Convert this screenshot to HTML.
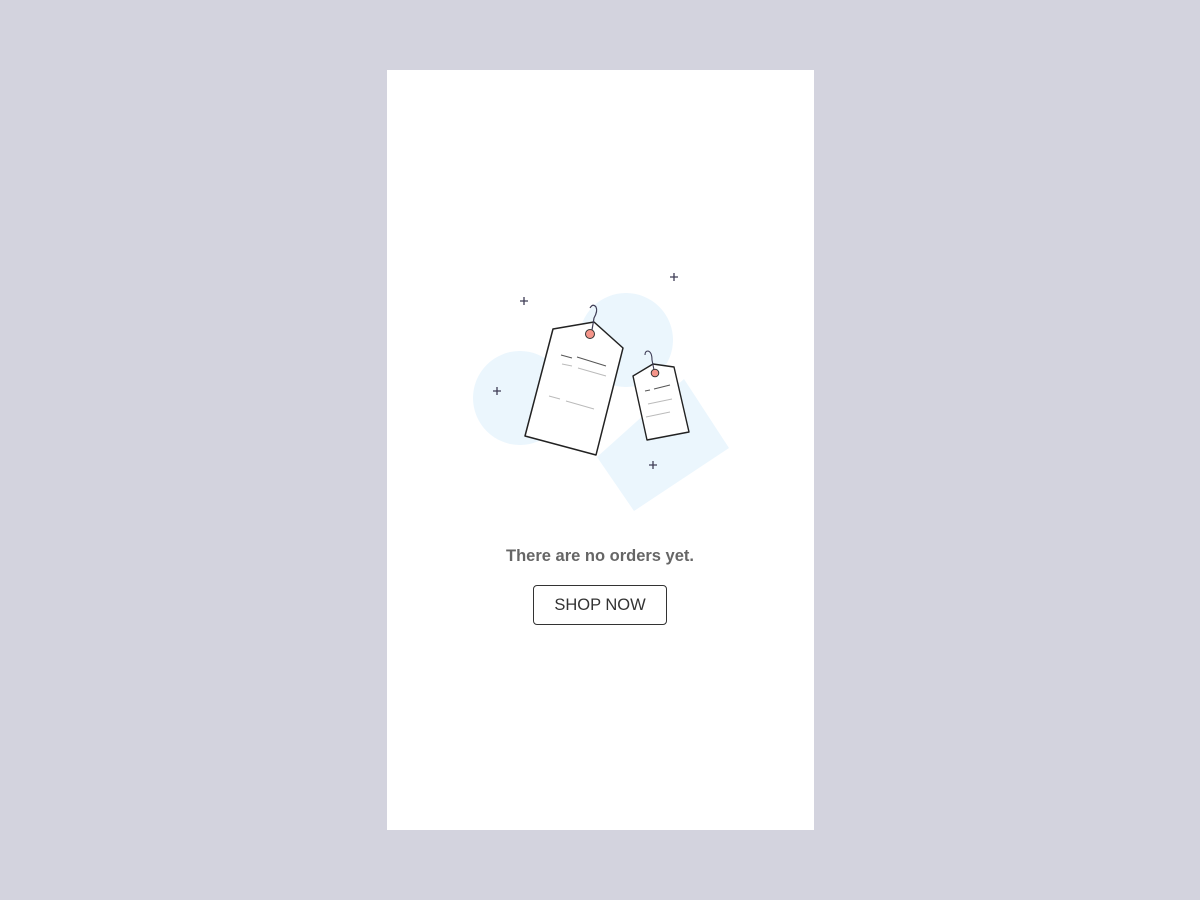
<!DOCTYPE html>
<html><head><style>
body{margin:0;width:1200px;height:900px;background:#d3d3de;position:relative;font-family:"Liberation Sans",sans-serif}
.card{position:absolute;left:387px;top:70px;width:427px;height:760px;background:#fff}
.t{position:absolute;left:0;width:1200px;top:547px;text-align:center;font-size:16.5px;font-weight:bold;color:#666}
.b{position:absolute;left:533px;top:585px;width:132px;height:38px;border:1px solid #333;border-radius:4px;text-align:center;line-height:38px;font-size:16.5px;color:#333;box-sizing:content-box}
</style></head><body>
<div class="card"></div>
<svg style="position:absolute;left:0;top:0" width="1200" height="900">
<g fill="#ebf6fd">
<circle cx="520" cy="398" r="47"/><circle cx="626" cy="340" r="47"/>
<polygon points="597,457 634,511 729,448 684,379"/>
</g>
<g stroke="#3f3d56" stroke-width="1.3">
<path d="M520 301h8M524 297v8M670 277h8M674 273v8M493 391h8M497 387v8M649 465h8M653 461v8"/>
</g>
<polygon points="553,329 594,322 623,348 596,455 525,436" fill="#fff" stroke="#222" stroke-width="1.5" stroke-linejoin="round"/>
<path d="M592 330 L594 318 Q598 311 596 307 Q593 303 590 308" fill="none" stroke="#3f3d56" stroke-width="1.2"/>
<circle cx="590" cy="334" r="4.5" fill="#f5958a" stroke="#333" stroke-width="1"/>
<g stroke-width="1">
<path d="M561 355l11 3M577 357l29 9" stroke="#555"/>
<path d="M562 364l10 2M578 368l28 8M549 396l11 3M566 401l28 8" stroke="#bbb"/>
</g>
<polygon points="633,376 653,364 674,367 689,432 647,440" fill="#fff" stroke="#222" stroke-width="1.4" stroke-linejoin="round"/>
<path d="M654 370 L652 360 Q652 352 648 351 Q645 351 645 355" fill="none" stroke="#3f3d56" stroke-width="1.1"/>
<circle cx="655" cy="373" r="3.8" fill="#f5958a" stroke="#333" stroke-width="1"/>
<g stroke-width="1">
<path d="M645 391l5-1M654 389l16-4" stroke="#555"/>
<path d="M648 404l24-5M646 417l24-5" stroke="#bbb"/>
</g>
</svg>
<div class="t">There are no orders yet.</div>
<div class="b">SHOP NOW</div>
</body></html>
